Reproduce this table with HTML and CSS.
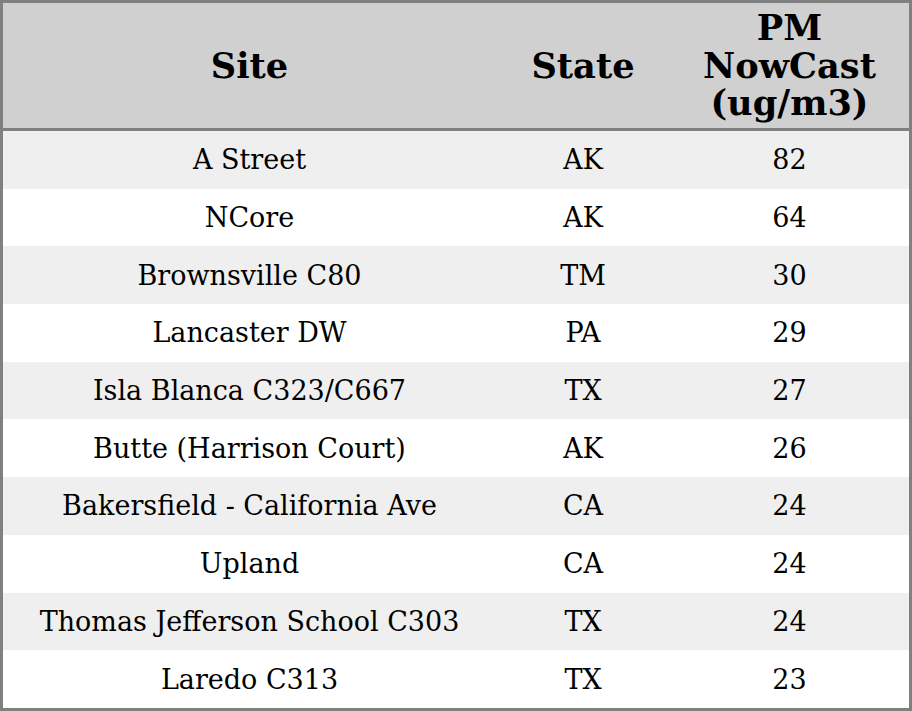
FILE: index.html
```html
<!DOCTYPE html>
<html>
<head>
<meta charset="utf-8">
<link rel="stylesheet" href="styles.css">
</head>
<body>
<table class="aq">
  <colgroup>
    <col class="c-site">
    <col class="c-state">
    <col class="c-pm">
  </colgroup>
  <thead>
    <tr><th>Site</th><th>State</th><th>PM NowCast (ug/m3)</th></tr>
  </thead>
  <tbody>
    <tr><td>A Street</td><td>AK</td><td>82</td></tr>
    <tr><td>NCore</td><td>AK</td><td>64</td></tr>
    <tr><td>Brownsville C80</td><td>TM</td><td>30</td></tr>
    <tr><td>Lancaster DW</td><td>PA</td><td>29</td></tr>
    <tr><td>Isla Blanca C323/C667</td><td>TX</td><td>27</td></tr>
    <tr><td>Butte (Harrison Court)</td><td>AK</td><td>26</td></tr>
    <tr><td>Bakersfield - California Ave</td><td>CA</td><td>24</td></tr>
    <tr><td>Upland</td><td>CA</td><td>24</td></tr>
    <tr><td>Thomas Jefferson School C303</td><td>TX</td><td>24</td></tr>
    <tr><td>Laredo C313</td><td>TX</td><td>23</td></tr>
  </tbody>
</table>
</body>
</html>
```
FILE: styles.css
```css
html, body {
  margin: 0;
  padding: 0;
  background: #ffffff;
}
.aq {
  width: 912px;
  height: 711px;
  border: 3px solid #808080;
  border-collapse: separate;
  border-spacing: 0;
  table-layout: fixed;
  font-family: "DejaVu Serif", serif;
  color: #000;
}
.c-site { width: 493px; }
.c-state { width: 174px; }
.c-pm { width: 239px; }
.aq th {
  background: #d0d0d0;
  font-size: 35.2px;
  font-weight: bold;
  line-height: 37.5px;
  padding: 6px 0;
  height: 113px;
  border-bottom: 3px solid #808080;
  text-align: center;
  vertical-align: middle;
}
.aq th:nth-child(3) {
  padding: 6px 20px;
}
.aq td {
  font-size: 27px;
  text-align: center;
  vertical-align: middle;
  padding: 0;
  height: 57.7px;
}
.aq tbody tr:nth-child(odd) td {
  background: #efefef;
}
```
